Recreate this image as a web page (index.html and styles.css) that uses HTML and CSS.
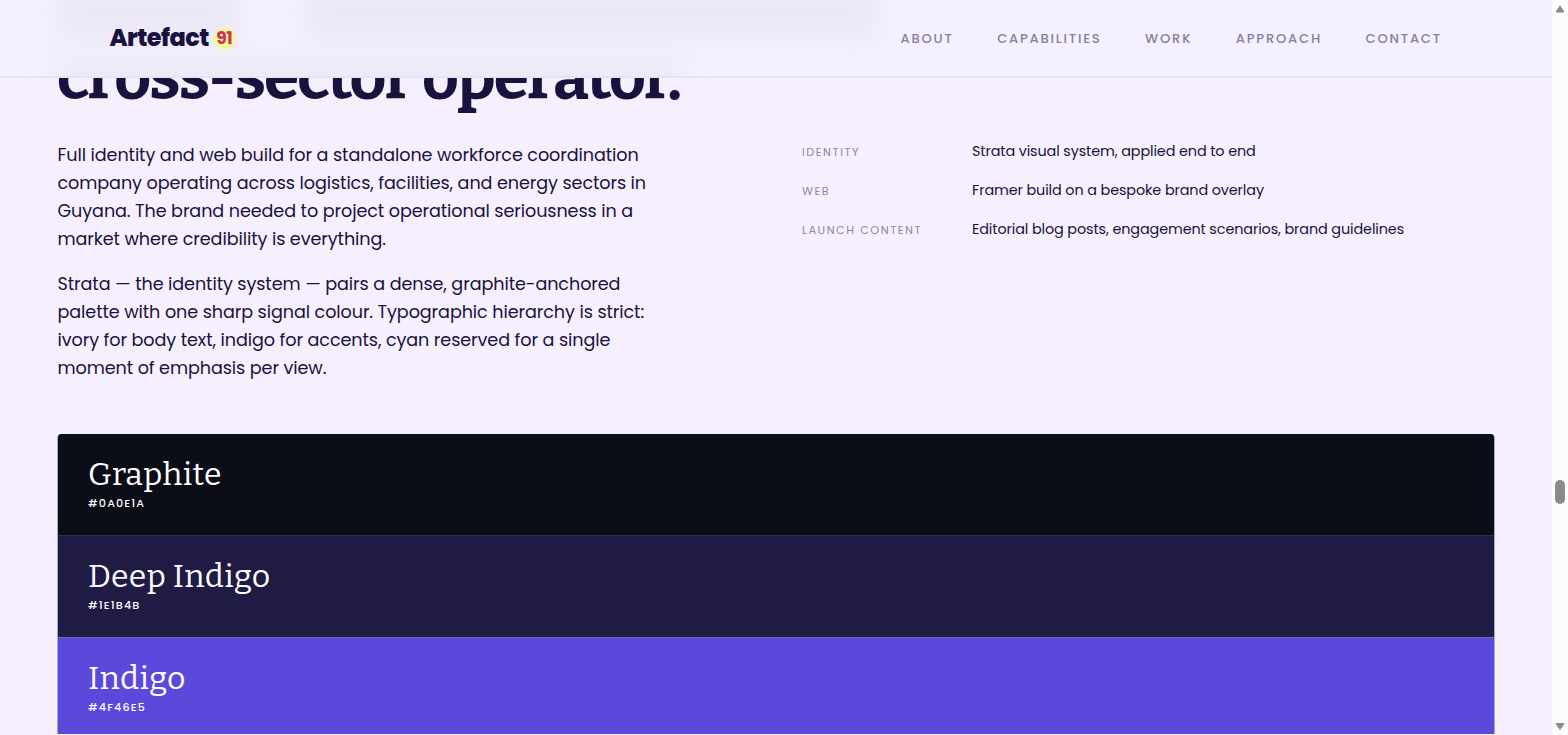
FILE: index.html
```html
<!DOCTYPE html>
<html lang="en">
<head>
  <meta charset="UTF-8" />
  <meta name="viewport" content="width=device-width, initial-scale=1.0" />
  <title>Artefact 91</title>
  <link rel="stylesheet" href="styles.css">
</head>
<body>
  <div class="page">
    <header class="site-header">
      <div class="shade shade-short"></div>
      <div class="shade shade-long"></div>
      <div class="shade shade-bottom"></div>
      <a class="logo"><span class="logo-word">Artefact</span><span class="logo-badge">91</span></a>
      <nav class="nav">
        <a>About</a>
        <a>Capabilities</a>
        <a>Work</a>
        <a>Approach</a>
        <a>Contact</a>
      </nav>
    </header>

    <main class="case">
      <h2 class="title">cross-sector operator.</h2>

      <div class="case-grid">
        <div class="case-copy">
          <p>Full identity and web build for a standalone workforce coordination company operating across logistics, facilities, and energy sectors in Guyana. The brand needed to project operational seriousness in a market where credibility is everything.</p>
          <p>Strata — the identity system — pairs a dense, graphite-anchored palette with one sharp signal colour. Typographic hierarchy is strict: ivory for body text, indigo for accents, cyan reserved for a single moment of emphasis per view.</p>
        </div>
        <dl class="facts">
          <dt>Identity</dt>
          <dd>Strata visual system, applied end to end</dd>
          <dt>Web</dt>
          <dd>Framer build on a bespoke brand overlay</dd>
          <dt>Launch content</dt>
          <dd>Editorial blog posts, engagement scenarios, brand guidelines</dd>
        </dl>
      </div>

      <div class="swatches">
        <div class="swatch graphite">
          <div class="swatch-name">Graphite</div>
          <div class="swatch-hex">#0A0E1A</div>
        </div>
        <div class="swatch deep-indigo">
          <div class="swatch-name">Deep Indigo</div>
          <div class="swatch-hex">#1E1B4B</div>
        </div>
        <div class="swatch indigo">
          <div class="swatch-name">Indigo</div>
          <div class="swatch-hex">#4F46E5</div>
        </div>
      </div>
    </main>
  </div>

  <div class="scrollbar">
    <svg width="16" height="16" viewBox="0 0 16 16"><path d="M8 6L12 12H4Z" fill="#8b8b8b" stroke="#8b8b8b" stroke-linejoin="round"/></svg>
    <span class="thumb"></span>
    <svg width="16" height="16" viewBox="0 0 16 16"><path d="M8 10.500L12 4.500H4Z" fill="#8b8b8b" stroke="#8b8b8b" stroke-linejoin="round"/></svg>
  </div>
</body>
</html>
```
FILE: styles.css
```css
* {
  box-sizing: border-box;
}
body {
  margin: 0;
  display: flex;
  height: 735px;
  overflow: hidden;
  background: #f6f0fe;
  color: #1a123e;
  font-family: Poppins, Inter, sans-serif;
}
.page {
  position: relative;
  width: 1552px;
  height: 734px;
  overflow: hidden;
}

/* header sits over the scrolled page */
.site-header {
  position: absolute;
  top: 0;
  left: 0;
  right: 0;
  z-index: 2;
  height: 78px;
  padding: 0 110px;
  display: flex;
  align-items: center;
  justify-content: space-between;
  background: #f4f0fe;
  border-bottom: 2px solid #e7e3f2;
  overflow: hidden;
}
/* soft shadows of the heading lines behind the bar */
.shade {
  position: absolute;
  background: #ece7f5;
  filter: blur(12px);
}
.shade-short {
  top: -12px;
  left: 57px;
  width: 180px;
  height: 50px;
}
.shade-long {
  top: -12px;
  left: 305px;
  width: 572px;
  height: 50px;
}
.shade-bottom {
  top: 62px;
  left: 57px;
  width: 622px;
  height: 28px;
}
.logo {
  position: relative;
  display: flex;
  align-items: center;
  gap: 3px;
  font-weight: 800;
  font-size: 24px;
  line-height: 36px;
}
.logo-word {
  margin-left: -0.5px;
  letter-spacing: -0.55px;
}
.logo-badge {
  width: 25px;
  height: 25px;
  border-radius: 50%;
  background: radial-gradient(circle, #f0fa90 50%, rgba(240, 250, 144, 0) 72%);
  color: #c9305b;
  font-size: 17px;
  font-weight: 700;
  line-height: 25px;
  text-align: center;
  letter-spacing: -0.5px;
}
.nav {
  position: relative;
  display: flex;
  gap: 43.5px;
  padding-top: 1px;
  font-size: 13.12px;
  font-weight: 500;
  letter-spacing: 1.8px;
  text-transform: uppercase;
  color: #877fa3;
}

.case {
  padding: 43px 57px 0;
}
.title {
  margin: 0;
  height: 70px;
  font-family: Bitter, "DejaVu Serif", serif;
  font-size: 64px;
  font-weight: 700;
  line-height: 70px;
  letter-spacing: -2.05px;
}
.case-grid {
  display: grid;
  grid-template-columns: 1fr 1fr;
  column-gap: 52px;
  margin-top: 28px;
}
.case-copy {
  width: 610px;
  padding-left: 0.5px;
}
.case-copy p {
  margin: 0 0 17px;
  font-size: 17.6px;
  line-height: 28px;
  letter-spacing: -0.09px;
}
.facts {
  margin: 0;
  display: grid;
  grid-template-columns: 150px 1fr;
  grid-auto-rows: 21px;
  gap: 18px 20px;
  align-content: start;
  align-items: center;
}
.facts dt {
  padding-top: 2px;
  font-size: 11.2px;
  letter-spacing: 1.57px;
  text-transform: uppercase;
  color: #8c85a6;
}
.facts dd {
  margin: 0;
  font-size: 14.4px;
  letter-spacing: -0.12px;
  white-space: nowrap;
}

.swatches {
  margin-top: 35px;
  border: 1px solid rgba(124, 119, 150, 0.6);
  border-top: 0;
  border-radius: 4px 4px 0 0;
  overflow: hidden;
}
.swatch {
  height: 102px;
  padding: 20px 30px;
  color: #fdfbff;
  border-bottom: 1px solid #35324f;
}
.graphite {
  background: #0b0d17;
}
.deep-indigo {
  background: #1f1b45;
  border-bottom-color: #6e67a4;
}
.indigo {
  background: #5a49da;
}
.swatch-name {
  font-family: Bitter, "DejaVu Serif", serif;
  font-size: 32px;
  line-height: 40px;
  letter-spacing: 0.3px;
}
.swatch-hex {
  font-size: 11.2px;
  font-weight: 500;
  line-height: 18px;
  letter-spacing: 1.1px;
}

.scrollbar {
  width: 16px;
  height: 735px;
  background: #fcfcfc;
  display: flex;
  flex-direction: column;
  align-items: center;
}
.scrollbar .thumb {
  width: 10px;
  height: 24px;
  margin: 464px 0 auto;
  border-radius: 5px;
  background: #8b8b8b;
}
```
